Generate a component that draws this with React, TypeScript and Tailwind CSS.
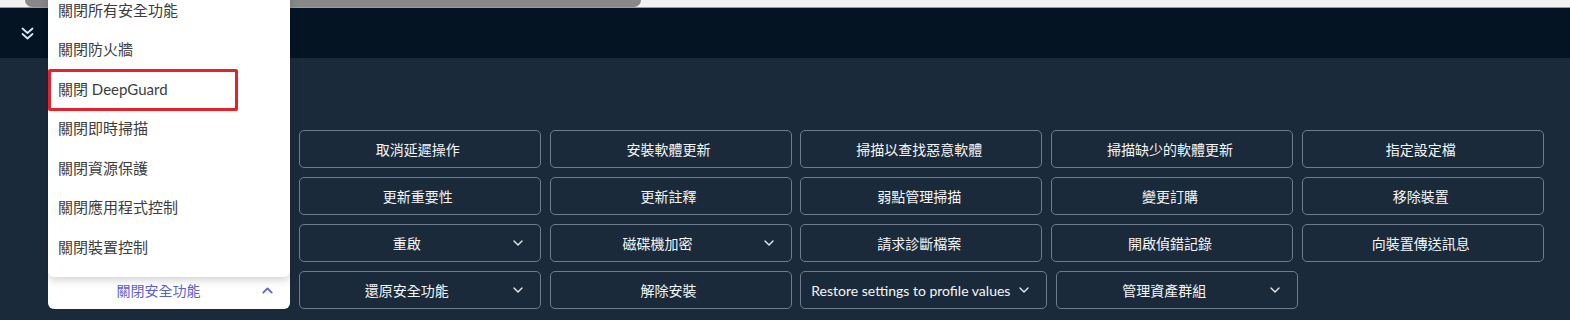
import { ChevronDown, ChevronUp } from 'lucide-react';

const CJK = "font-['Segoe_UI','Lato','Noto_Sans_CJK_TC',sans-serif]";

type Action = { label: string; menu?: boolean };

const ROWS: (Action | null)[][] = [
  [null, { label: '取消延遲操作' }, { label: '安裝軟體更新' }, { label: '掃描以查找惡意軟體' }, { label: '掃描缺少的軟體更新' }, { label: '指定設定檔' }],
  [null, { label: '更新重要性' }, { label: '更新註釋' }, { label: '弱點管理掃描' }, { label: '變更訂購' }, { label: '移除裝置' }],
  [null, { label: '重啟', menu: true }, { label: '磁碟機加密', menu: true }, { label: '請求診斷檔案' }, { label: '開啟偵錯記錄' }, { label: '向裝置傳送訊息' }],
];

const LAST_ROW: Action[] = [
  { label: '還原安全功能', menu: true },
  { label: '解除安裝' },
  { label: 'Restore settings to profile values', menu: true },
  { label: '管理資產群組', menu: true },
];

const MENU_ITEMS = [
  '關閉所有安全功能',
  '關閉防火牆',
  '關閉 DeepGuard',
  '關閉即時掃描',
  '關閉資源保護',
  '關閉應用程式控制',
  '關閉裝置控制',
];

function ActionButton({ action }: { action: Action }) {
  return (
    <button
      className={`flex h-[38px] min-w-[242px] shrink-0 items-center rounded-[5px] border border-[#6e7c8d] bg-transparent pl-[10px] pr-[14px] text-[14px] text-[#f4f6f8] ${CJK}`}
    >
      <span className="flex-1 whitespace-nowrap text-center">{action.label}</span>
      {action.menu && <ChevronDown size={16} strokeWidth={2} className="ml-[6px] shrink-0 text-[#e8ecf0]" />}
    </button>
  );
}

export default function App() {
  return (
    <div className="relative h-[320px] w-[1570px] overflow-hidden bg-[#1b2a3a]">
      {/* top scrollbar */}
      <div className="h-[7px] bg-[#f1f1f1]">
        <div className="ml-[25px] h-[7px] w-[616px] rounded-b-full bg-[#888888]" />
      </div>
      <div className="h-px bg-[#9c9c9c]" />

      {/* header */}
      <div className="flex h-[50px] items-center bg-[#041422] pl-[21px]">
        <svg width="13" height="13" viewBox="0 0 13 13" fill="none" stroke="#d6e6f5" strokeWidth="1.8" strokeLinecap="round" strokeLinejoin="round">
          <path d="M1.5 1.5l5 4.5 5-4.5" />
          <path d="M1.5 7l5 4.5 5-4.5" />
        </svg>
      </div>

      {/* actions */}
      <div className="flex flex-col gap-[9px] pl-[48px] pt-[72px]">
        {ROWS.map((row, r) => (
          <div key={r} className="flex gap-[8.75px]">
            {row.map((a, i) =>
              a ? <ActionButton key={i} action={a} /> : <div key={i} className="w-[242px] shrink-0" />
            )}
          </div>
        ))}
        <div className="flex gap-[8.75px]">
          <button
            className={`flex h-[38px] w-[242px] shrink-0 items-center rounded-b-[6px] bg-white pl-[10px] pr-[14px] text-[14px] text-[#5a62d6] ${CJK}`}
          >
            <span className="flex-1 text-center">關閉安全功能</span>
            <ChevronUp size={17} strokeWidth={2.5} className="shrink-0 text-[#5a62d6]" />
          </button>
          {LAST_ROW.map((a, i) => (
            <ActionButton key={i} action={a} />
          ))}
        </div>
      </div>

      {/* open dropdown menu */}
      <div className="absolute left-[48px] top-[-10px] w-[242px] rounded-b-[6px] bg-white pb-[10px] shadow-[0_3px_8px_rgba(0,0,0,0.18)]">
        {MENU_ITEMS.map((item) => (
          <div
            key={item}
            className={`flex h-[39.5px] items-center pl-[10px] text-[15px] text-[#3d3d3d] ${CJK}`}
          >
            {item}
          </div>
        ))}
      </div>

      {/* highlight annotation */}
      <div className="absolute left-[48px] top-[69px] h-[42px] w-[190px] rounded-[2px] border-[3px] border-[#e8202a]" />
    </div>
  );
}
